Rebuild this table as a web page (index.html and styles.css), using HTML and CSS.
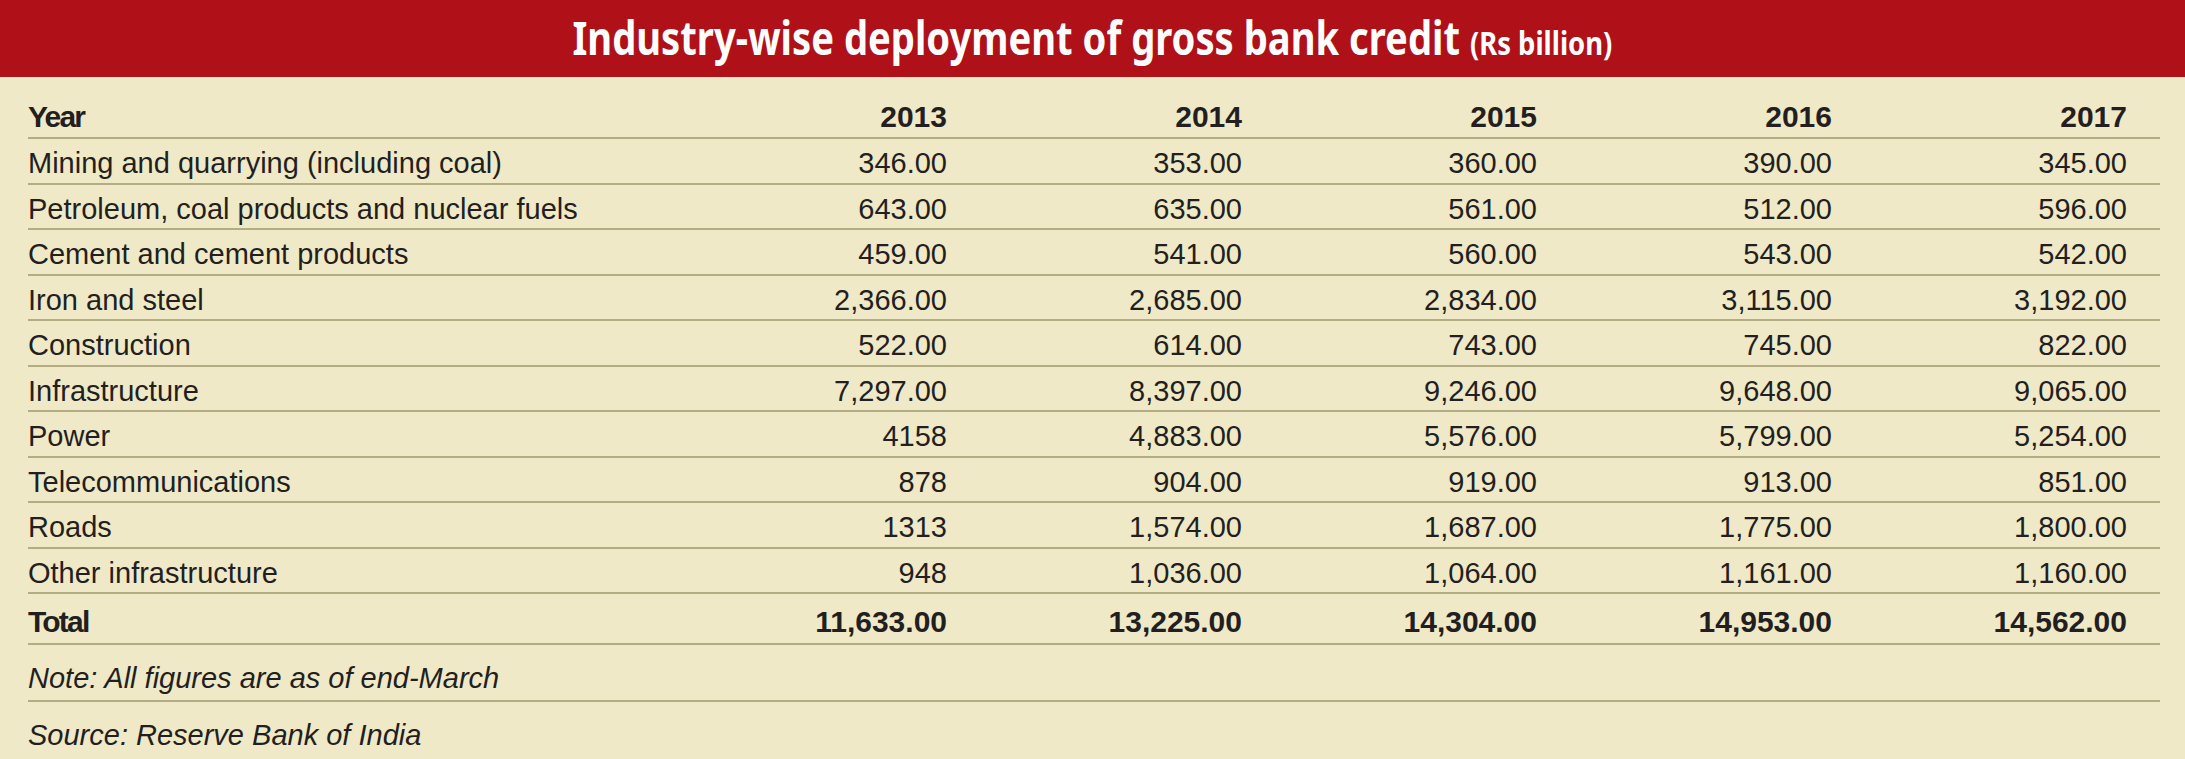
FILE: index.html
```html
<!DOCTYPE html>
<html lang="en">
<head>
<meta charset="utf-8">
<title>Industry-wise deployment of gross bank credit</title>
<link rel="stylesheet" href="styles.css">
</head>
<body>
<header class="banner">
  <h1 class="title">Industry-wise deployment of gross bank credit <span class="unit">(Rs billion)</span></h1>
</header>
<main class="sheet">
  <div class="row row-head"><span class="label bold-label">Year</span><span class="num">2013</span><span class="num">2014</span><span class="num">2015</span><span class="num">2016</span><span class="num">2017</span></div>
  <div class="row"><span class="label">Mining and quarrying (including coal)</span><span class="num">346.00</span><span class="num">353.00</span><span class="num">360.00</span><span class="num">390.00</span><span class="num">345.00</span></div>
  <div class="row"><span class="label">Petroleum, coal products and nuclear fuels</span><span class="num">643.00</span><span class="num">635.00</span><span class="num">561.00</span><span class="num">512.00</span><span class="num">596.00</span></div>
  <div class="row"><span class="label">Cement and cement products</span><span class="num">459.00</span><span class="num">541.00</span><span class="num">560.00</span><span class="num">543.00</span><span class="num">542.00</span></div>
  <div class="row"><span class="label">Iron and steel</span><span class="num">2,366.00</span><span class="num">2,685.00</span><span class="num">2,834.00</span><span class="num">3,115.00</span><span class="num">3,192.00</span></div>
  <div class="row"><span class="label">Construction</span><span class="num">522.00</span><span class="num">614.00</span><span class="num">743.00</span><span class="num">745.00</span><span class="num">822.00</span></div>
  <div class="row"><span class="label">Infrastructure</span><span class="num">7,297.00</span><span class="num">8,397.00</span><span class="num">9,246.00</span><span class="num">9,648.00</span><span class="num">9,065.00</span></div>
  <div class="row"><span class="label">Power</span><span class="num">4158</span><span class="num">4,883.00</span><span class="num">5,576.00</span><span class="num">5,799.00</span><span class="num">5,254.00</span></div>
  <div class="row"><span class="label">Telecommunications</span><span class="num">878</span><span class="num">904.00</span><span class="num">919.00</span><span class="num">913.00</span><span class="num">851.00</span></div>
  <div class="row"><span class="label">Roads</span><span class="num">1313</span><span class="num">1,574.00</span><span class="num">1,687.00</span><span class="num">1,775.00</span><span class="num">1,800.00</span></div>
  <div class="row"><span class="label">Other infrastructure</span><span class="num">948</span><span class="num">1,036.00</span><span class="num">1,064.00</span><span class="num">1,161.00</span><span class="num">1,160.00</span></div>
  <div class="row row-total"><span class="label bold-label">Total</span><span class="num">11,633.00</span><span class="num">13,225.00</span><span class="num">14,304.00</span><span class="num">14,953.00</span><span class="num">14,562.00</span></div>
  <p class="note">Note: All figures are as of end-March</p>
  <p class="note source">Source: Reserve Bank of India</p>
</main>
</body>
</html>
```
FILE: styles.css
```css
html, body {
  margin: 0;
  padding: 0;
}

body {
  width: 2185px;
  height: 759px;
  overflow: hidden;
  background: #efe9c7;
  color: #231f20;
  font-family: "Liberation Sans", Arial, sans-serif;
}

.banner {
  box-sizing: border-box;
  height: 77px;
  padding-top: 9px;
  background: #b01119;
  text-align: center;
}

.title {
  display: inline-block;
  margin: 0;
  font-family: "Noto Sans", "Open Sans", sans-serif;
  font-weight: 700;
  font-size: 46px;
  line-height: 56px;
  color: #ffffff;
  white-space: nowrap;
  transform: scaleX(0.83);
  transform-origin: center;
}

.unit {
  font-size: 33px;
}

.sheet {
  padding: 0 25px 0 28px;
}

.row {
  box-sizing: border-box;
  display: grid;
  grid-template-columns: 1fr repeat(5, 295px);
  height: 45.5px;
  padding: 8px 33px 0 0;
  border-bottom: 2px solid #b4ad84;
  font-size: 29px;
  line-height: 32px;
  white-space: nowrap;
}

.num {
  text-align: right;
}

.row-head {
  height: 62px;
  padding-top: 24px;
  font-weight: 700;
  font-size: 30px;
}

.row-total {
  height: 51px;
  padding-top: 12px;
  font-weight: 700;
  font-size: 30px;
}

.bold-label {
  letter-spacing: -1.8px;
}

.note {
  box-sizing: border-box;
  margin: 0;
  height: 57px;
  padding-top: 17px;
  border-bottom: 2px solid #b4ad84;
  font-size: 29px;
  line-height: 32px;
  font-style: italic;
}

.note.source {
  border-bottom: 0;
}
```
